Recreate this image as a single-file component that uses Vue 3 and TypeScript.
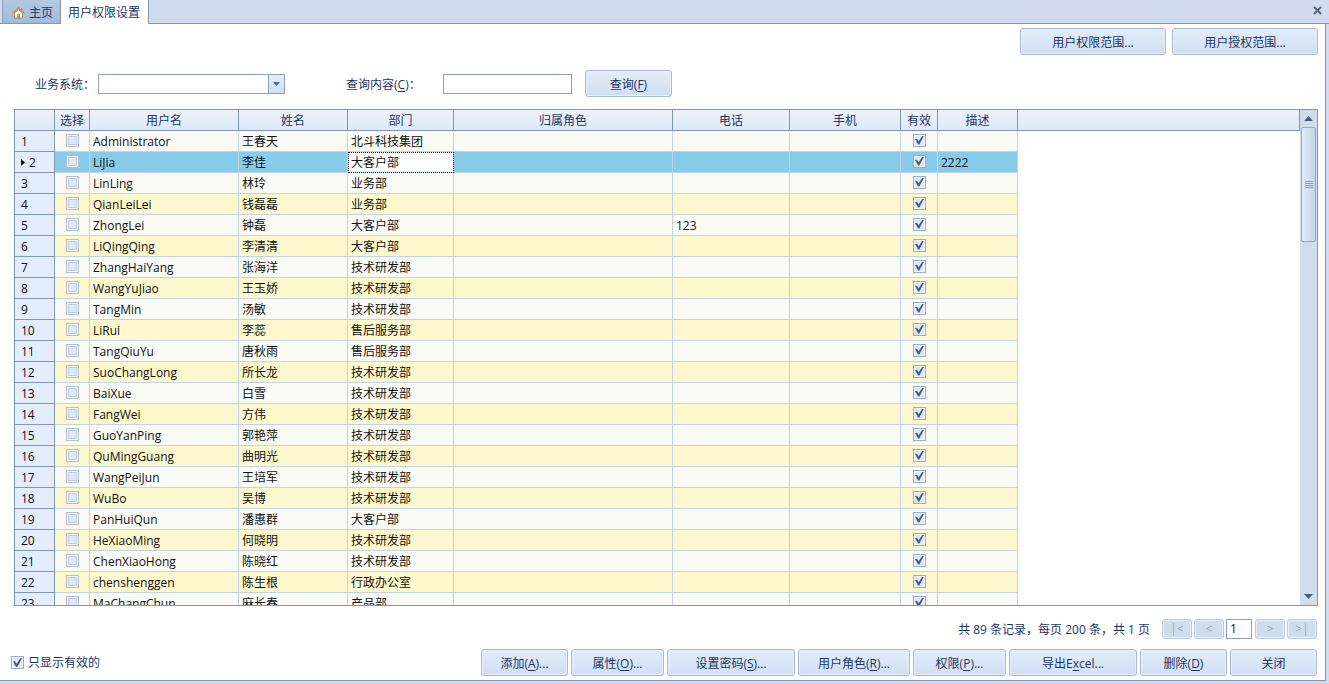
<script setup lang="ts">
import { ref } from 'vue'

interface UserRow {
  account: string
  name: string
  dept: string
  phone?: string
  note?: string
  picked: boolean
  active: boolean
}

const source: string[][] = [
  ['Administrator', '王春天', '北斗科技集团'],
  ['LiJia', '李佳', '大客户部', '', '2222'],
  ['LinLing', '林玲', '业务部'],
  ['QianLeiLei', '钱磊磊', '业务部'],
  ['ZhongLei', '钟磊', '大客户部', '123'],
  ['LiQingQing', '李清清', '大客户部'],
  ['ZhangHaiYang', '张海洋', '技术研发部'],
  ['WangYuJiao', '王玉娇', '技术研发部'],
  ['TangMin', '汤敏', '技术研发部'],
  ['LiRui', '李蕊', '售后服务部'],
  ['TangQiuYu', '唐秋雨', '售后服务部'],
  ['SuoChangLong', '所长龙', '技术研发部'],
  ['BaiXue', '白雪', '技术研发部'],
  ['FangWei', '方伟', '技术研发部'],
  ['GuoYanPing', '郭艳萍', '技术研发部'],
  ['QuMingGuang', '曲明光', '技术研发部'],
  ['WangPeiJun', '王培军', '技术研发部'],
  ['WuBo', '吴博', '技术研发部'],
  ['PanHuiQun', '潘惠群', '大客户部'],
  ['HeXiaoMing', '何晓明', '技术研发部'],
  ['ChenXiaoHong', '陈晓红', '技术研发部'],
  ['chenshenggen', '陈生根', '行政办公室'],
  ['MaChangChun', '麻长春', '产品部'],
]

const rows = ref<UserRow[]>(
  source.map(([account, name, dept, phone, note]) => ({
    account, name, dept, phone, note, picked: false, active: true,
  })),
)
const current = ref(1)
const system = ref('')
const keyword = ref('')
const page = ref('1')
const onlyActive = ref(true)

const headers = ['', '选择', '用户名', '姓名', '部门', '归属角色', '电话', '手机', '有效', '描述', '']
const columns = ['num', 'pick', 'account', 'name', 'dept', 'role', 'phone', 'mobile', 'active', 'note', 'rest']

const actions = [
  { before: '添加(', key: 'A', after: ')...', size: 'w-s' },
  { before: '属性(', key: 'O', after: ')...', size: 'w-m' },
  { before: '设置密码(', key: 'S', after: ')...', size: 'w-xl' },
  { before: '用户角色(', key: 'R', after: ')...', size: 'w-l' },
  { before: '权限(', key: 'P', after: ')...', size: 'w-m' },
  { before: '导出E', key: 'x', after: 'cel...', size: 'w-xl' },
  { before: '删除(', key: 'D', after: ')', size: 'w-s' },
  { before: '关闭', key: '', after: '', size: 'w-s' },
]
</script>

<template>
  <div class="shell">
    <nav class="tabs">
      <button type="button" class="tab home">
        <svg width="13" height="12" viewBox="0 0 13 12" aria-hidden="true">
          <path d="M2.5 6v5h8V6l-4-3.5z" fill="#fbf3dc" stroke="#9c947f" />
          <path d="M.8 6.2 6.5 1l5.7 5.2" fill="none" stroke="#d08a4c" stroke-width="1.5" />
          <path d="M5 7h3v4H5z" fill="#8fae5c" />
          <path d="M9 1.5h1.5v2H9z" fill="#b98263" />
        </svg>
        主页
      </button>
      <button type="button" class="tab selected">用户权限设置</button>
      <button type="button" class="close" aria-label="关闭标签">
        <svg width="9" height="9" viewBox="0 0 9 9" aria-hidden="true">
          <path d="M1 1l7 7M8 1 1 8" stroke="#5a6377" stroke-width="2" />
        </svg>
      </button>
    </nav>

    <main class="panel">
      <div class="scopes">
        <button type="button" class="btn scope">用户权限范围...</button>
        <button type="button" class="btn scope">用户授权范围...</button>
      </div>

      <form class="filters" @submit.prevent>
        <label for="system">业务系统：</label>
        <div class="combo">
          <select id="system" v-model="system">
            <option value=""></option>
          </select>
          <span class="drop">
            <svg width="7" height="4" viewBox="0 0 7 4" aria-hidden="true"><path d="M0 0h7L3.500 4z" fill="#4f6a92" /></svg>
          </span>
        </div>
        <label for="keyword" class="kw-label">查询内容(<u>C</u>)：</label>
        <input id="keyword" v-model="keyword" class="field keyword" type="text" />
        <button type="submit" class="btn w-s">查询(<u>F</u>)</button>
      </form>

      <section class="grid">
        <div class="view">
          <table>
            <colgroup>
              <col v-for="c in columns" :key="c" :class="'c-' + c" />
            </colgroup>
            <thead>
              <tr>
                <th v-for="(h, i) in headers" :key="i" scope="col">{{ h }}</th>
              </tr>
            </thead>
            <tbody>
              <tr v-for="(r, i) in rows" :key="r.account" :class="{ current: i === current }" @click="current = i">
                <th scope="row">
                  <svg v-if="i === current" class="pointer" width="4" height="7" viewBox="0 0 4 7" aria-hidden="true"><path d="M0 0l4 3.500L0 7z" fill="#111" /></svg>{{ i + 1 }}
                </th>
                <td class="mid"><input v-model="r.picked" type="checkbox" class="check faint" :aria-label="'选择 ' + r.account" /></td>
                <td>{{ r.account }}</td>
                <td>{{ r.name }}</td>
                <td class="dept">{{ r.dept }}</td>
                <td></td>
                <td>{{ r.phone }}</td>
                <td></td>
                <td class="mid"><input v-model="r.active" type="checkbox" class="check" :aria-label="'有效 ' + r.account" /></td>
                <td>{{ r.note }}</td>
                <td class="rest"></td>
              </tr>
            </tbody>
          </table>
        </div>
        <div class="scroll">
          <button type="button" class="arrow" aria-label="向上滚动">
            <svg width="9" height="5" viewBox="0 0 9 5" aria-hidden="true"><path d="M0 5h9L4.500 0z" fill="#4c5b78" /></svg>
          </button>
          <div class="track">
            <div class="thumb"><i></i><i></i><i></i><i></i></div>
          </div>
          <button type="button" class="arrow" aria-label="向下滚动">
            <svg width="9" height="5" viewBox="0 0 9 5" aria-hidden="true"><path d="M0 0h9L4.500 5z" fill="#4c5b78" /></svg>
          </button>
        </div>
      </section>

      <div class="pager">
        <span class="summary">共 89 条记录，每页 200 条，共 1 页</span>
        <button type="button" class="btn page" disabled>|&lt;</button>
        <button type="button" class="btn page" disabled>&lt;</button>
        <input v-model="page" class="field page-no" type="text" aria-label="页码" />
        <button type="button" class="btn page" disabled>&gt;</button>
        <button type="button" class="btn page" disabled>&gt;|</button>
      </div>

      <footer class="bottom">
        <label class="only"><input v-model="onlyActive" type="checkbox" class="check" />只显示有效的</label>
        <div class="actions">
          <button v-for="a in actions" :key="a.before" type="button" class="btn" :class="a.size">{{ a.before }}<u v-if="a.key">{{ a.key }}</u>{{ a.after }}</button>
        </div>
      </footer>
    </main>
  </div>
</template>

<style>
body {
  margin: 0;
  background: #d0dcee;
}
</style>

<style scoped>
.shell {
  display: flex;
  flex-direction: column;
  height: 100vh;
  box-sizing: border-box;
  padding: 0 3px 3px 0;
  background: #d0dcee;
  color: #1e3560;
  font-family: "Open Sans", "Noto Sans CJK SC", sans-serif;
  font-size: 12px;
  line-height: 20px;
}
button,
input,
select {
  box-sizing: border-box;
  margin: 0;
  font: inherit;
  color: inherit;
}
.tabs {
  display: flex;
  height: 24px;
  box-sizing: border-box;
  padding-left: 2px;
  border-bottom: 1px solid #8295b5;
  margin-right: -3px;
}
.tab {
  height: 23px;
  padding: 0 8px 0 7px;
  border: 0;
  border-right: 1px solid #8295b5;
  white-space: nowrap;
}
.home {
  display: flex;
  align-items: center;
  gap: 4px;
  padding: 3px 7px 0 9px;
  background: linear-gradient(#b5c8e3, #a5bad9);
  border-left: 1px solid #8ca0c2;
}
.selected {
  height: 24px;
  margin-bottom: -1px;
  padding-top: 1px;
  background: #fff;
}
.close {
  margin-left: auto;
  padding: 0 7px 2px;
  border: 0;
  background: none;
  line-height: 0;
}
.panel {
  display: flex;
  flex: 1;
  flex-direction: column;
  min-height: 0;
  padding: 4px 7px 4px 14px;
  border: solid #8295b5;
  border-width: 0 1px 1px 0;
  background: #fff;
}
.btn {
  height: 27px;
  padding: 2px 0 0;
  border: 1px solid #a9b9d5;
  border-radius: 3px;
  background: linear-gradient(#e3edfa, #cfdff2);
  box-shadow: inset 0 0 0 1px #e6effa;
  white-space: nowrap;
  text-align: center;
}
u {
  text-underline-offset: 2px;
}
.scopes {
  display: flex;
  justify-content: flex-end;
  gap: 6px;
}
.scope {
  width: 146px;
}
.filters {
  display: flex;
  align-items: center;
  margin-top: 15px;
  padding-left: 21px;
}
.filters label {
  padding-top: 2px;
}
.combo {
  display: flex;
  width: 187px;
  height: 20px;
  box-sizing: border-box;
  margin-left: 3px;
  border: 1px solid #8d9dba;
  background: #fff;
}
.combo select {
  flex: 1;
  appearance: none;
  border: 0;
  padding: 0 3px;
  background: #fff;
}
.drop {
  display: flex;
  width: 15px;
  align-items: center;
  justify-content: center;
  border-left: 1px solid #8d9dba;
  background: linear-gradient(#e3edfa, #cfdff2);
}
.kw-label {
  width: 97px;
  margin-left: 61px;
}
.field {
  height: 20px;
  padding: 0 3px;
  border: 1px solid #8d9dba;
  background: #fff;
}
.keyword {
  width: 129px;
  margin-right: 13px;
}
.w-s { width: 87px; }
.w-m { width: 93px; }
.w-l { width: 112px; }
.w-xl { width: 128px; }
.grid {
  display: flex;
  flex: 1;
  min-height: 0;
  margin-top: 12px;
  border: 1px solid #8295b5;
}
.view {
  flex: 1;
  min-width: 0;
  overflow: hidden;
}
table {
  width: 100%;
  border-collapse: separate;
  border-spacing: 0;
  table-layout: fixed;
}
.c-num { width: 40px; }
.c-pick { width: 35px; }
.c-account { width: 149px; }
.c-name { width: 109px; }
.c-dept { width: 106px; }
.c-role { width: 219px; }
.c-phone { width: 117px; }
.c-mobile { width: 111px; }
.c-active { width: 37px; }
.c-note { width: 80px; }
th,
td {
  height: 18px;
  padding: 2px 3px 0;
  border: solid #c2d3e8;
  border-width: 0 1px 1px 0;
  font-weight: normal;
  line-height: 18px;
  white-space: nowrap;
}
thead th {
  padding: 2px 0 0;
  border-color: #8295b5;
  background: linear-gradient(#ecf3fb, #dfe8f8);
  text-align: center;
}
tbody th {
  padding-left: 6px;
  border-color: #8295b5;
  background: #e4edfb;
  text-align: left;
}
tbody {
  color: #111;
}
td {
  background: #fbfbf5;
}
tbody tr:nth-child(even) td {
  background: #fdf8cd;
}
tbody tr.current td {
  background: #87cdea;
}
tbody tr.current td.dept {
  background: #fff;
  outline: 1px dotted #111;
  outline-offset: -1px;
}
tbody tr td.rest,
tbody tr.current td.rest {
  border: 0;
  background: #fff;
}
td.mid {
  padding: 0 0 2px 1px;
  text-align: center;
}
.pointer {
  margin-right: 4px;
  vertical-align: 1px;
}
.check {
  display: inline-block;
  width: 13px;
  height: 13px;
  appearance: none;
  border: 1px solid #9cadca;
  background: #dfe9f6;
  box-shadow: inset 0 0 0 1px #f3f7fc;
  vertical-align: middle;
}
.mid .check {
  display: block;
  margin: 0 auto;
}
.faint {
  border-color: #b6c0d2;
  box-shadow: inset 0 0 0 1px #f3f5f8, inset 0 0 0 2px #c5cedd;
}
.check:checked::before {
  display: block;
  width: 9px;
  height: 9px;
  margin: 1px;
  background: #4a5b80;
  clip-path: polygon(0 40%, 22% 36%, 40% 64%, 84% 0, 100% 4%, 48% 100%, 34% 100%);
  content: "";
}
.scroll {
  display: flex;
  width: 17px;
  flex-direction: column;
  background: #cfdded;
}
.arrow {
  display: flex;
  height: 17px;
  align-items: center;
  justify-content: center;
  padding: 0;
  border: 0;
  background: none;
}
.track {
  flex: 1;
}
.thumb {
  display: flex;
  width: 15px;
  height: 25%;
  box-sizing: border-box;
  flex-direction: column;
  align-items: center;
  justify-content: center;
  gap: 1px;
  margin-left: 1px;
  border: 1px solid #94a7c8;
  border-radius: 2px;
  background: linear-gradient(90deg, #e3edf9, #c3d5eb);
}
.thumb i {
  width: 8px;
  height: 1px;
  background: #8b9dbd;
}
.pager {
  display: flex;
  align-items: center;
  justify-content: flex-end;
  gap: 2px;
  margin: 12px 1px 9px 0;
}
.summary {
  margin-right: 10px;
  padding-top: 2px;
}
.page {
  width: 30px;
  height: 20px;
  padding: 0;
  line-height: 16px;
  color: #93a6c2;
  background: #cfdeef;
  border-color: #bccbe0;
}
.page-no {
  width: 26px;
  margin-right: 1px;
  color: #111;
}
.bottom {
  display: flex;
  align-items: center;
  justify-content: space-between;
  margin-right: 1px;
}
.only {
  display: flex;
  align-items: center;
  gap: 4px;
  margin-left: -3px;
}
.actions {
  display: flex;
  gap: 3px;
}
</style>
